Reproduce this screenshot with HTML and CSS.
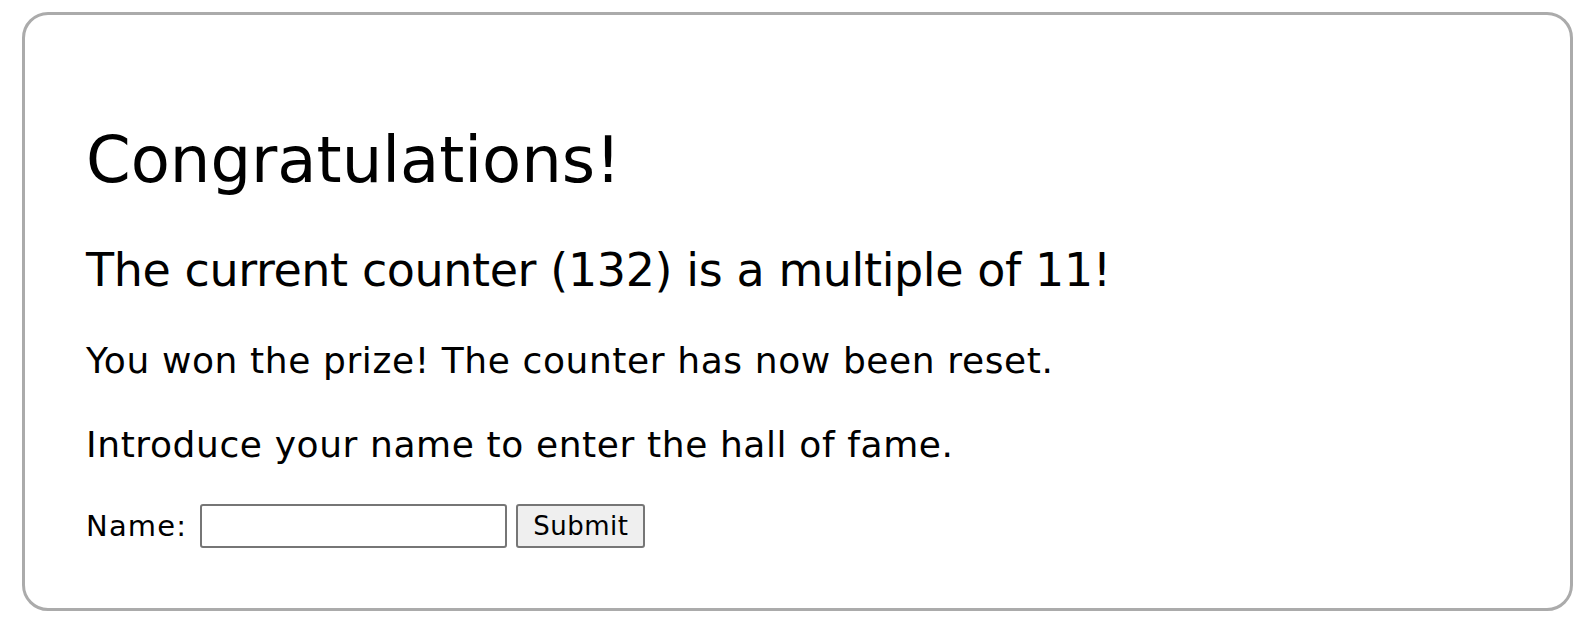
FILE: index.html
```html
<!DOCTYPE html>
<html lang="en">
<head>
<meta charset="utf-8">
<title>Congratulations!</title>
<link rel="stylesheet" href="styles.css">
</head>
<body>
<div class="card">
  <h1 class="title">Congratulations!</h1>
  <h2 class="subtitle">The current counter (132) is a multiple of 11!</h2>
  <p class="text">You won the prize! The counter has now been reset.</p>
  <p class="text">Introduce your name to enter the hall of fame.</p>
  <form class="form">
    <label class="label" for="name">Name:</label>
    <input class="input" id="name" type="text">
    <button class="button" type="submit">Submit</button>
  </form>
</div>
</body>
</html>
```
FILE: styles.css
```css
html, body {
  margin: 0;
  padding: 0;
  background: #ffffff;
}
body {
  padding: 12px 13px 15px 22px;
  font-family: "DejaVu Sans", sans-serif;
  color: #000000;
}
.card {
  border: 3px solid #ababab;
  border-radius: 26px;
  padding: 105px 59px 60px 61px;
  display: flex;
  flex-direction: column;
}
.title {
  margin: 0;
  font-size: 64px;
  line-height: 80px;
  font-weight: normal;
}
.subtitle {
  margin: 40px 0 0 0;
  font-size: 46px;
  line-height: 60px;
  font-weight: normal;
  letter-spacing: -0.4px;
}
.text {
  margin: 38px 0 0 0;
  font-size: 36px;
  line-height: 46px;
  letter-spacing: 0.6px;
}
.form {
  margin: 36px 0 0 0;
  display: flex;
  align-items: center;
  height: 44px;
}
.label {
  font-size: 29px;
  line-height: 44px;
  letter-spacing: 1.2px;
  margin-right: 13px;
}
.input {
  box-sizing: border-box;
  width: 307px;
  height: 44px;
  margin: 0;
  border: 2px solid #767676;
  border-radius: 3px;
  background: #ffffff;
  padding: 0 4px;
  font-family: "DejaVu Sans", sans-serif;
  font-size: 24px;
}
.button {
  box-sizing: border-box;
  width: 129px;
  height: 44px;
  margin: 0 0 0 9px;
  border: 2px solid #767676;
  border-radius: 3px;
  background: #efefef;
  padding: 0;
  font-family: "DejaVu Sans", sans-serif;
  font-size: 26px;
  letter-spacing: 0.5px;
  color: #000000;
}
```
